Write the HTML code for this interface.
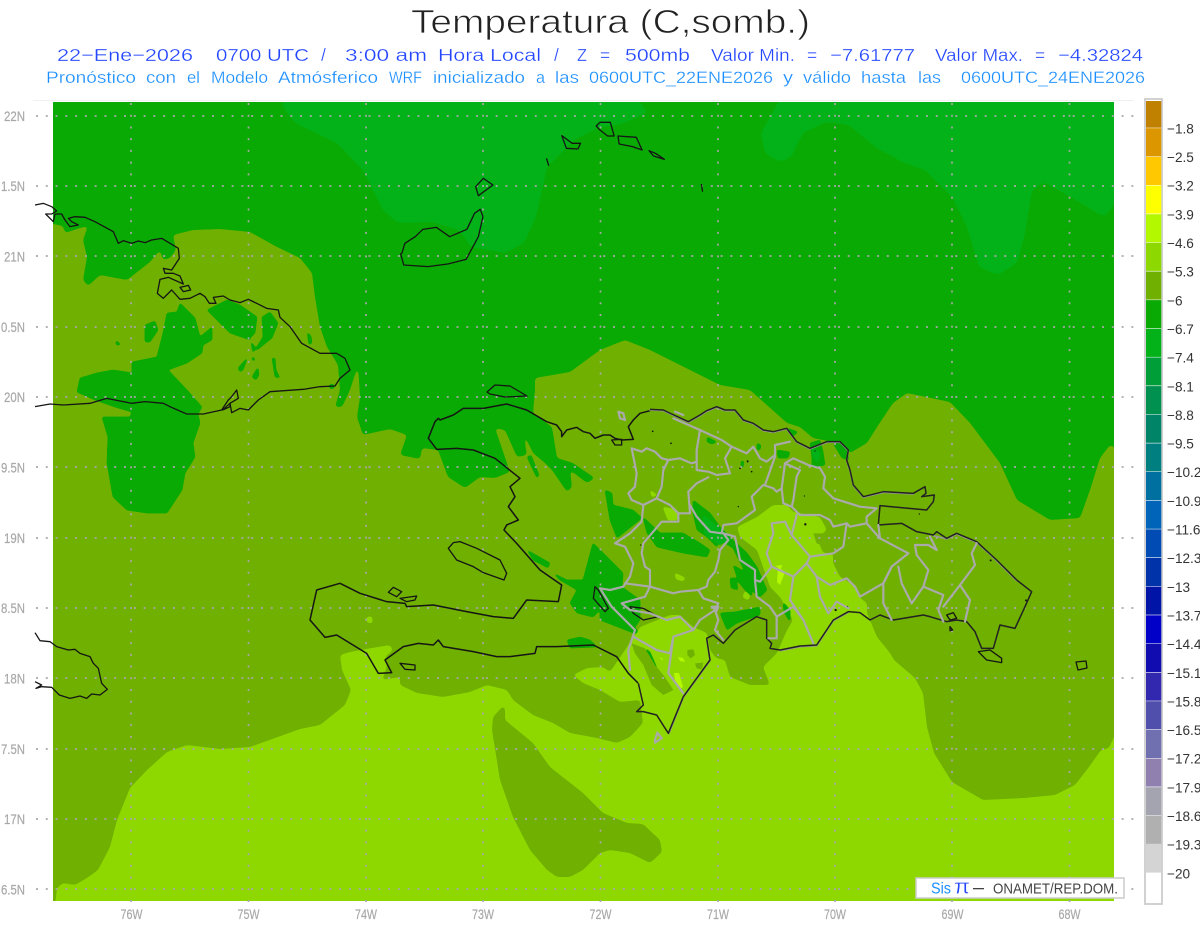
<!DOCTYPE html>
<html lang="es"><head><meta charset="utf-8"><title>Temperatura</title>
<style>
html,body{margin:0;padding:0;background:#fff;width:1200px;height:927px;overflow:hidden}
svg{display:block}
text{font-family:"Liberation Sans",sans-serif}
.c{fill:none;stroke:#151515;stroke-width:1.3;vector-effect:non-scaling-stroke;stroke-linejoin:round}
.p{fill:none;stroke:#aaa;stroke-width:2.2;vector-effect:non-scaling-stroke;stroke-linejoin:round;stroke-linecap:round}
.l2{fill:#2346ff;font-size:17.5px;stroke:#fff;stroke-width:.25}
.l3{fill:#1b8fff;font-size:17px;stroke:#fff;stroke-width:.25}
.ax{fill:#a8a8a8;font-size:14px;stroke:#a8a8a8;stroke-width:.2}
.cb{fill:#333;font-size:13.6px}
</style></head><body>
<svg width="1200" height="927" viewBox="0 0 1200 927" xmlns="http://www.w3.org/2000/svg">
<defs>
<clipPath id="mapclip"><rect x="53" y="102" width="1061" height="799"/></clipPath>
<filter id="sm3" filterUnits="userSpaceOnUse" x="0" y="60" width="1200" height="880" color-interpolation-filters="sRGB">
<feGaussianBlur stdDeviation="3"/><feComponentTransfer><feFuncA type="linear" slope="14" intercept="-6.5"/></feComponentTransfer>
</filter>
<filter id="sm2" filterUnits="userSpaceOnUse" x="0" y="60" width="1200" height="880" color-interpolation-filters="sRGB">
<feGaussianBlur stdDeviation="1.8"/><feComponentTransfer><feFuncA type="linear" slope="12" intercept="-5.5"/></feComponentTransfer>
</filter>
<filter id="sm1" filterUnits="userSpaceOnUse" x="0" y="60" width="1200" height="880" color-interpolation-filters="sRGB">
<feGaussianBlur stdDeviation="1.1"/><feComponentTransfer><feFuncA type="linear" slope="8" intercept="-2.4"/></feComponentTransfer>
</filter>
</defs>
<rect width="1200" height="927" fill="#fff"/>
<text x="411" y="33" font-size="33" textLength="399" lengthAdjust="spacingAndGlyphs" fill="#222" stroke="#fff" stroke-width=".75">Temperatura (C,somb.)</text>

<text class="l2" x="57" y="61" textLength="136" lengthAdjust="spacingAndGlyphs">22−Ene−2026</text>
<text class="l2" x="216" y="61" textLength="93" lengthAdjust="spacingAndGlyphs">0700 UTC</text>
<text class="l2" x="321" y="61">/</text>
<text class="l2" x="345" y="61" textLength="82" lengthAdjust="spacingAndGlyphs">3:00 am</text>
<text class="l2" x="438" y="61" textLength="103" lengthAdjust="spacingAndGlyphs">Hora Local</text>
<text class="l2" x="554" y="61">/</text>
<text class="l2" x="577" y="61" textLength="10" lengthAdjust="spacingAndGlyphs">Z</text>
<text class="l2" x="600" y="61">=</text>
<text class="l2" x="625" y="61" textLength="65" lengthAdjust="spacingAndGlyphs">500mb</text>
<text class="l2" x="711" y="61" textLength="84" lengthAdjust="spacingAndGlyphs">Valor Min.</text>
<text class="l2" x="807" y="61">=</text>
<text class="l2" x="830" y="61" textLength="85" lengthAdjust="spacingAndGlyphs">−7.61777</text>
<text class="l2" x="935" y="61" textLength="88" lengthAdjust="spacingAndGlyphs">Valor Max.</text>
<text class="l2" x="1035" y="61">=</text>
<text class="l2" x="1058" y="61" textLength="85" lengthAdjust="spacingAndGlyphs">−4.32824</text>

<text class="l3" x="46" y="83" textLength="90" lengthAdjust="spacingAndGlyphs">Pronóstico</text>
<text class="l3" x="146" y="83" textLength="30" lengthAdjust="spacingAndGlyphs">con</text>
<text class="l3" x="187" y="83" textLength="13" lengthAdjust="spacingAndGlyphs">el</text>
<text class="l3" x="211" y="83" textLength="57" lengthAdjust="spacingAndGlyphs">Modelo</text>
<text class="l3" x="278" y="83" textLength="100" lengthAdjust="spacingAndGlyphs">Atmósferico</text>
<text class="l3" x="389" y="83" textLength="33" lengthAdjust="spacingAndGlyphs">WRF</text>
<text class="l3" x="433" y="83" textLength="92" lengthAdjust="spacingAndGlyphs">inicializado</text>
<text class="l3" x="536" y="83" textLength="9" lengthAdjust="spacingAndGlyphs">a</text>
<text class="l3" x="555" y="83" textLength="24" lengthAdjust="spacingAndGlyphs">las</text>
<text class="l3" x="589" y="83" textLength="184" lengthAdjust="spacingAndGlyphs">0600UTC_22ENE2026</text>
<text class="l3" x="783" y="83" textLength="10" lengthAdjust="spacingAndGlyphs">y</text>
<text class="l3" x="803" y="83" textLength="48" lengthAdjust="spacingAndGlyphs">válido</text>
<text class="l3" x="861" y="83" textLength="45" lengthAdjust="spacingAndGlyphs">hasta</text>
<text class="l3" x="918" y="83" textLength="23" lengthAdjust="spacingAndGlyphs">las</text>
<text class="l3" x="961" y="83" textLength="184" lengthAdjust="spacingAndGlyphs">0600UTC_24ENE2026</text>

<line x1="33" y1="100.5" x2="1134" y2="100.5" stroke="#f0f0f0" stroke-width="1"/>

<g clip-path="url(#mapclip)">
<!-- base -->
<rect x="53" y="102" width="1061" height="799" fill="#0aaa04"/>
<!-- lighter green -->
<g filter="url(#sm3)" fill="#02b218">
<polygon points="283,92 283,107 295,123 337,143 363,170 383,210 398,223 432,222 459,230 471,247 505,253 524,243 536,217 547,167 574,140 600,127 619,125 648,113 632,92"/>
<polygon points="784,92 761,133 765,153 780,162 791,157 803,133 826,122 849,125 875,147 902,162 925,170 952,197 967,227 979,267 998,275 1017,263 1025,233 1032,190 1044,182 1071,197 1097,213 1105,217 1124,190 1124,92"/>
</g>
<!-- olive -->
<polygon filter="url(#sm2)" fill="#6fb000" points="43,222 63,226 65,233 80,228 88,226 83,240 87,257 83,280 88,286 100,275 127,280 150,262 160,250 163,260 170,258 176,250 173,235 193,230 220,229 250,232 277,247 300,258 312,273 315,297 320,327 327,347 338,365 340,390 335,407 342,407 350,390 358,365 360,397 357,417 363,435 390,429 407,435 400,455 420,459 422,448 438,450 448,477 465,488 480,477 495,478 510,472 495,428 505,430 517,457 527,455 523,432 533,453 545,463 552,470 567,492 572,487 570,470 587,483 595,478 583,470 573,463 557,458 552,427 533,413 535,390 535,378 570,372 600,350 625,340 650,350 690,370 720,385 750,390 787,423 800,427 813,438 833,442 847,450 850,453 867,443 877,427 893,403 907,393 950,402 970,423 1000,463 1017,500 1050,520 1080,518 1090,490 1100,458 1110,445 1124,452 1124,911 43,911"/>
<!-- lime -->
<polygon filter="url(#sm2)" fill="#8ed800" points="43,911 55,905 57,888 63,883 75,885 87,878 98,870 110,847 117,820 130,788 147,770 167,752 187,745 220,749 250,747 300,729 320,725 345,705 351,690 342,670 340,655 350,652 372,648 390,645 393,650 385,657 387,667 382,680 400,677 400,685 417,693 443,697 470,692 487,685 507,690 513,700 533,715 553,723 570,733 597,738 617,743 630,737 643,723 640,700 620,702 600,690 583,683 573,675 587,668 603,667 610,672 625,650 640,627 670,615 680,615 693,627 707,633 710,650 716,658 725,660 730,677 750,685 770,685 763,667 777,653 787,630 793,620 780,597 770,587 763,567 757,550 740,537 737,527 757,517 773,505 787,505 793,512 820,517 827,530 817,538 823,553 833,553 833,563 840,577 857,587 860,598 867,603 867,613 877,637 890,653 894,660 915,678 923,693 927,727 934,753 952,782 983,800 1024,798 1055,795 1075,785 1089,767 1101,750 1109,748 1124,715 1124,911"/>
<!-- olive blob south -->
<polygon filter="url(#sm2)" fill="#6fb000" points="503,706 493,717 492,730 500,780 513,817 530,850 547,870 557,877 570,877 583,870 600,853 610,850 630,853 650,863 662,852 660,840 643,824 627,823 603,813 583,793 550,767 533,743 505,720 505,708"/>

<!-- dark patches -->
<g fill="#0aaa04" filter="url(#sm1)">
<polygon points="145,325 155,321 158,330 150,342 145,342 145,335"/>
<polygon points="180,303 195,318 200,337 212,327 212,340 203,345 202,353 187,363 168,370 187,390 202,407 198,414 200,423 193,443 195,457 185,473 182,490 167,513 147,513 127,510 113,497 107,463 108,437 102,417 130,417 132,412 115,407 95,400 77,392 80,378 97,373 113,370 132,373 132,362 157,357 163,333 167,313 177,312"/>
<polygon points="207,310 227,300 240,305 257,317 255,333 250,338 253,353 263,337 262,317 270,312 278,323 272,338 257,350 250,340 230,333 217,320"/>
<polygon points="238,368 248,357 243,370 240,372"/><polygon points="251,357 255,358 254,362"/>
<polygon points="252,377 258,367 259,375 256,380"/>
<polygon points="272,358 275,377 280,378 276,370 275,358"/>
<polygon points="307,332 311,336 312,343 309,345"/>
<polygon points="116,340 121,345 116,345"/><polygon points="148,391 153,389 151,394"/>
<polygon points="330,384 335,385 333,389 329,388"/>
<polygon points="527,457 531,455 539,475 537,478"/>
<polygon points="567,640 580,637 590,640 597,647 570,648"/>
<polygon points="527,550 550,563 548,568 533,560"/>
<polygon points="553,573 567,580 583,580 593,543 610,560 623,573 622,587 640,600 640,620 633,630 600,610 593,617 577,613 570,603 577,590 560,580"/>
<polygon points="605,490 612,493 613,505 633,510 642,518 617,538 610,520"/>
<polygon points="600,550 617,567 623,578 600,577"/>
<polygon points="643,517 660,533 683,533 700,543 710,550 707,557 683,553 657,547 647,533"/>
<polygon points="693,500 710,513 720,527 733,540 747,553 757,567 767,590 760,597 747,587 737,577 733,565 745,572 733,548 720,540 717,547 707,537 697,530 693,513"/>
<polygon points="737,567 745,575 753,597 745,590 737,580"/>
<polygon points="730,578 736,578 738,590 731,588"/>
<polygon points="720,613 735,612 760,607 760,615 737,623 727,630"/>
<polygon points="783,602 790,610 790,622 784,612"/>
<polygon points="707,437 717,442 712,444 707,442"/>
<polygon points="757,443 761,445 760,450 757,450"/>
<polygon points="777,450 790,452 788,458 778,458"/>
<polygon points="787,428 798,432 792,437"/>
<polygon points="810,443 820,440 823,452 825,465 812,468 812,458"/>
<polygon points="833,443 845,445 849,460 842,458"/>
<polygon points="741,461 744,461 743,468 741,467"/>
<polygon points="645,648 650,652 657,668 654,668"/><polygon points="657,672 661,675 662,680 657,678"/>
<polygon points="600,610 638,630 636,634 600,620"/>
</g>
<g fill="#02b218" filter="url(#sm1)">
<polygon points="703,515 715,525 730,538 720,545 705,535"/>
<polygon points="812,448 820,452 818,462 813,458"/>
</g>
<!-- olive & lime details -->
<g fill="#6fb000" transform="translate(600,390) scale(.33333)">
<path d="M95,760L135,775L165,825L190,855L220,900L190,915L155,885L130,825L105,790Z"/>
<path d="M262,780L280,778L285,795L272,805L262,795Z"/><path d="M285,820L310,818L305,838L290,835Z"/>
<path d="M640,430L690,430L680,470L650,460Z"/>
</g>
<g fill="#8ed800" filter="url(#sm1)">
<polygon points="367,617 372,617 372,623 367,622"/>
<polygon points="675,573 685,578 683,581 676,579"/>
<polygon points="663,507 677,510 677,520 668,520"/>
<polygon points="650,490 657,495 652,497"/>
<polygon points="745,591 750,596 748,600 743,597"/>
<polygon points="458,617 462,617 460,620"/>
</g>
<g fill="#b4f800">
<polygon points="778,567 785,572 780,585 777,582"/>
<polygon points="775,566 782,565 781,569"/>
<polygon points="674,673 679,673 683,687 680,689 675,680"/>
<polygon points="678,657 683,658 685,662 680,661"/>
<polygon points="659,657 663,659 662,660"/>
</g>
</g>

<!-- grid -->
<g stroke="#aba6ab" stroke-width="1.7" fill="none">
<g stroke-dasharray="2 7.78">
<line x1="36" y1="116" x2="1135" y2="116"/><line x1="36" y1="186" x2="1135" y2="186"/>
<line x1="36" y1="256" x2="1135" y2="256"/><line x1="36" y1="327" x2="1135" y2="327"/>
<line x1="36" y1="397" x2="1135" y2="397"/><line x1="36" y1="467" x2="1135" y2="467"/>
<line x1="36" y1="538" x2="1135" y2="538"/><line x1="36" y1="608" x2="1135" y2="608"/>
<line x1="36" y1="678" x2="1135" y2="678"/><line x1="36" y1="749" x2="1135" y2="749"/>
<line x1="36" y1="819" x2="1135" y2="819"/><line x1="36" y1="889" x2="1135" y2="889"/>
</g>
<g stroke-dasharray="2 9.72">
<line x1="131" y1="103" x2="131" y2="906"/><line x1="248.5" y1="103" x2="248.5" y2="906"/>
<line x1="366" y1="103" x2="366" y2="906"/><line x1="483" y1="103" x2="483" y2="906"/>
<line x1="600.5" y1="103" x2="600.5" y2="906"/><line x1="718" y1="103" x2="718" y2="906"/>
<line x1="835" y1="103" x2="835" y2="906"/><line x1="952" y1="103" x2="952" y2="906"/>
<line x1="1069.5" y1="103" x2="1069.5" y2="906"/>
</g>
</g>

<!-- coasts -->
<g transform="translate(0,190) scale(.33333)">
<path class="c" d="M105,45L130,40L155,50L170,63L155,72L137,72L160,95L165,72L185,72L195,90L210,110L235,105L215,95L205,85L225,80L255,82L285,95L340,125L355,160L370,152L395,160L415,153L435,158L455,150L485,145L510,160L535,175L538,205L515,240L490,235L495,250L520,250L540,258L550,282L505,262L480,268L472,310L490,325L515,300L540,328L570,325L600,310L615,320L628,340L648,340L640,322L670,318L690,330L720,338L745,328L770,340L800,355L835,360L840,382L870,410L905,460L960,490L1010,490L1035,505L1050,540L1020,565L1005,588L960,590L910,598L810,605L775,630L745,660L720,655L695,668L690,640L715,625L710,600L695,620L685,630L665,660L610,672L560,672L510,650L490,640L435,635L395,640L320,625L270,640L190,645L150,642L105,650"/>
<path class="c" d="M540,292L565,286L572,300L550,305Z"/>
<path class="c" d="M690,640L668,660L690,650Z"/>
</g>
<g transform="translate(0,620) scale(.33333)">
<path class="c" d="M105,38L120,62L150,65L170,80L205,90L225,88L240,100L270,110L280,130L295,145L305,190L322,208L300,225L275,222L260,235L240,228L210,235L178,225L155,202L125,200L108,205L125,195L105,185"/>
</g>
<g transform="scale(.3827,.33333)">
<path class="c" d="M1050,760L1058,730L1085,710L1105,688L1140,682L1175,710L1220,688L1240,640L1255,628L1262,650L1250,710L1218,778L1170,792L1118,800L1055,795L1047,762Z"/>
<path class="c" d="M1263,535L1288,555L1250,587L1243,560Z"/>
<path class="c" d="M1428,475L1434,497"/>
<path class="c" d="M1468,407L1495,430L1517,430L1510,447L1480,445Z"/>
</g>
<g transform="translate(600,0) scale(.3827,.33333)">
<path class="c" d="M-10,378L0,367L27,367L37,408L20,408L0,390Z"/>
<path class="c" d="M47,408L95,412L110,450L85,440L50,432Z"/>
<path class="c" d="M128,452L145,460L168,478L140,468Z"/>
<path class="c" d="M265,552L268,575"/>
</g>
<path class="c" d="M487,392L495,385L510,386L527,396L505,397L490,394Z"/>
<path class="c" d="M1076,662L1086,661L1087,668L1078,670Z"/>
<g transform="translate(300,390) scale(.33333)">
<path class="c" style="stroke-width:1.5" d="M1014,879L985,850L950,800L880,765L770,770L710,770L705,790L630,800L590,800L520,785L430,770L415,750L400,765L355,760L310,770L255,810L275,848L235,850L200,790L110,735L75,742L30,690L50,600L120,580L180,610L260,635L315,640L320,650L400,645L500,665L580,680L640,685L680,630L775,635L785,585L720,540L650,460L612,420L620,405L655,390L625,350L645,320L630,290L660,265L635,245L585,205L520,180L470,175L410,178L385,145L405,95L415,85L420,90L460,75L490,55L550,55L620,42L680,60L740,95L770,105L785,125L785,140L800,120L830,112L850,125L870,130L885,145L910,135L930,135L945,145L965,150L1000,148L985,110L1000,90L1020,70L1050,62"/>
<path class="c" d="M445,475L460,458L480,455L530,475L600,510L620,550L612,570L550,548L520,530L470,510Z"/>
<path class="c" d="M265,607L280,592L305,605L290,620Z"/>
<path class="c" d="M300,625L350,618L345,630L320,635Z"/>
<path class="c" d="M300,820L345,825L345,840L315,838Z"/>
<path class="c" d="M885,590L895,600L925,655L915,665L880,625Z"/>
<path class="c" d="M935,150L965,148L965,165L945,165Z"/>
</g>
<g transform="translate(600,390) scale(.33333)">
<path class="p" style="stroke:#999;stroke-width:1.6" d="M150,60L190,62L215,74L265,97L300,77L320,64L350,52L375,62L405,62L430,92L460,102L490,122L520,127L560,117L590,157L630,177L680,157L720,157L745,182L740,212L750,242L760,287L790,322L850,307L940,312M1000,437L1040,447L1070,432L1130,457L1190,512L1250,572M745,667L700,692L650,767L600,770L540,782M320,747L330,812L250,922L207,1030"/>
<path class="c" style="stroke-width:1.5;stroke:#222" d="M150,58L190,60L215,72L265,95L300,75L320,62L350,50L375,60L405,60L430,90L460,100L490,120L520,125L560,115L590,155L630,175L680,155L720,155L745,180L740,210L750,240L760,285L790,320L850,305L940,310L975,290L978,310L965,320L1003,315L1000,335L980,360L840,347L835,405L905,400L950,425L1000,435L1010,425L1040,445L1070,430L1130,455L1190,510L1250,570L1295,605L1275,650L1245,715L1200,705L1180,775L1145,775L1125,725L1100,695L1070,690L1040,695L990,680L970,675L880,690L840,675L810,690L780,668L745,665L700,690L650,765L600,768L540,780L510,775L515,760L500,745L500,690L470,680L405,720L370,760L340,735L320,745L330,810L250,920L205,1030L170,975L130,965L110,965L130,945L115,880"/>
<path class="c" d="M1135,785L1170,780L1205,805L1205,818L1160,810Z"/>
<path class="c" d="M1040,675L1060,668L1070,685L1050,690Z"/>
<path class="c" d="M1050,710L1058,720L1050,722Z"/>
<path class="c" d="M90,650L130,655L175,680L130,690L100,670Z"/>
<g fill="#111">
<circle cx="158" cy="124" r="2.5"/><circle cx="213" cy="160" r="2.5"/><circle cx="443" cy="214" r="3"/><circle cx="420" cy="235" r="2.5"/><circle cx="455" cy="245" r="2.5"/><circle cx="616" cy="403" r="3.5"/><circle cx="707" cy="660" r="3.5"/><circle cx="742" cy="650" r="2.5"/><circle cx="1172" cy="511" r="3"/><circle cx="1278" cy="631" r="3"/><circle cx="958" cy="372" r="2"/><circle cx="613" cy="318" r="2"/><circle cx="415" cy="350" r="2"/><circle cx="122" cy="465" r="2"/><circle cx="645" cy="183" r="2"/>
</g>
<!-- provinces -->
<path class="p" d="M95,175L110,250L105,290L85,310L95,330L130,345L125,395L90,430L45,460L75,470L100,520L90,560L70,590L30,600L0,595L35,650L105,720L85,780L90,840"/>
<path class="p" d="M95,175L125,185L140,175L165,185L185,205L205,210L240,205L275,220L290,215"/>
<path class="p" d="M220,85L300,120L365,150L395,170L440,190L460,170L480,205L500,215L525,195L525,165L570,155"/>
<path class="p" d="M300,120L290,180L290,240L325,245L350,255L390,250L375,205L395,170"/>
<path class="p" d="M205,210L190,240L185,290L170,325L130,345M170,325L210,345L235,370L270,370L265,305L290,280L325,262"/>
<path class="p" d="M270,345L290,380L330,425L365,430L370,405L410,400L465,360L455,320L490,285L520,295L530,305L545,295L555,220L600,240L590,260L580,330L575,350L600,375L660,375L690,390L700,410L740,400L730,470L700,490L630,500L575,435L590,375"/>
<path class="p" d="M525,200L495,285M545,295L550,340L575,350M555,220L580,205L625,225L660,235L675,260L670,295L700,325L780,350L830,355L800,380L800,400L840,445L925,490"/>
<path class="p" d="M515,400L555,395L575,435M515,400L520,430L500,490L515,530L570,555L580,560L570,630L610,690L640,760"/>
<path class="p" d="M630,500L620,520L650,560L690,585L740,565L765,590L780,620L850,580L875,530L925,490M800,400L750,410L740,400M620,520L580,560M650,560L660,620L685,670L710,635L745,655"/>
<path class="p" d="M515,530L480,575L465,570L465,540L420,510L405,440L370,430L385,450L360,480L355,510L345,545L325,570L320,590L295,600L240,605L220,610L150,590L75,580"/>
<path class="p" d="M125,490L135,530L150,540L150,590L135,620M125,490L130,460L185,395L235,395L235,370"/>
<path class="p" d="M295,600L310,625L355,640L345,660L300,690L280,720M345,660L355,690L345,720L370,750"/>
<path class="p" d="M465,570L470,620L510,650L530,680L530,745L505,745M530,680L580,650L610,690"/>
<path class="p" d="M135,620L65,640L90,660L150,670L200,690L240,680L280,720L220,740L210,790L170,780L100,740M220,740L205,850L250,910"/>
<path class="p" d="M875,530L850,580L850,640L875,690M895,530L905,580L935,640L970,590L985,540L950,495L945,465L985,465L1010,480L990,440M970,590L1030,615L1015,660L1030,695M1130,460L1115,490L1125,525L1080,585L1030,650M1080,585L1110,630L1095,695M840,445L835,405"/>
<path class="p" d="M55,65L70,70L75,90L60,85ZM225,65L250,75M335,650L355,650L350,662ZM165,1050L172,1028L185,1045L165,1058Z"/>
</g>

<!-- axes -->
<g class="ax">
<text x="4" y="121" textLength="21" lengthAdjust="spacingAndGlyphs">22N</text>
<text x="1" y="191" textLength="24" lengthAdjust="spacingAndGlyphs">1.5N</text>
<text x="4" y="261.5" textLength="21" lengthAdjust="spacingAndGlyphs">21N</text>
<text x="1" y="332" textLength="24" lengthAdjust="spacingAndGlyphs">0.5N</text>
<text x="4" y="402" textLength="21" lengthAdjust="spacingAndGlyphs">20N</text>
<text x="1" y="472.5" textLength="24" lengthAdjust="spacingAndGlyphs">9.5N</text>
<text x="4" y="543" textLength="21" lengthAdjust="spacingAndGlyphs">19N</text>
<text x="1" y="613" textLength="24" lengthAdjust="spacingAndGlyphs">8.5N</text>
<text x="4" y="683.5" textLength="21" lengthAdjust="spacingAndGlyphs">18N</text>
<text x="1" y="754" textLength="24" lengthAdjust="spacingAndGlyphs">7.5N</text>
<text x="4" y="824" textLength="21" lengthAdjust="spacingAndGlyphs">17N</text>
<text x="1" y="894.5" textLength="24" lengthAdjust="spacingAndGlyphs">6.5N</text>
<text x="120.5" y="919" textLength="22" lengthAdjust="spacingAndGlyphs">76W</text>
<text x="237.5" y="919" textLength="22" lengthAdjust="spacingAndGlyphs">75W</text>
<text x="355" y="919" textLength="22" lengthAdjust="spacingAndGlyphs">74W</text>
<text x="472" y="919" textLength="22" lengthAdjust="spacingAndGlyphs">73W</text>
<text x="589.5" y="919" textLength="22" lengthAdjust="spacingAndGlyphs">72W</text>
<text x="707" y="919" textLength="22" lengthAdjust="spacingAndGlyphs">71W</text>
<text x="824" y="919" textLength="22" lengthAdjust="spacingAndGlyphs">70W</text>
<text x="941.5" y="919" textLength="22" lengthAdjust="spacingAndGlyphs">69W</text>
<text x="1058.5" y="919" textLength="22" lengthAdjust="spacingAndGlyphs">68W</text>
</g>

<!-- legend box -->
<rect x="916" y="878" width="208" height="20" fill="#fff" stroke="#ccc" stroke-width="1.5"/>
<text x="931" y="893.5" font-size="16" fill="#1b8fff" textLength="20" lengthAdjust="spacingAndGlyphs">Sis</text>
<text x="954" y="893.5" font-size="20" fill="#2346ff" textLength="16" lengthAdjust="spacingAndGlyphs" stroke="#fff" stroke-width=".3">π</text>
<rect x="973" y="888" width="11" height="1.3" fill="#444"/>
<text x="993" y="893.5" font-size="14.5" fill="#444" textLength="125" lengthAdjust="spacingAndGlyphs">ONAMET/REP.DOM.</text>

<!-- colourbar -->
<rect x="1145" y="99" width="17" height="805" fill="#fff" stroke="#ccc" stroke-width="1.8"/>
<g>
<rect x="1146" y="101" width="15.3" height="26.7" fill="#c08000"/>
<rect x="1146" y="128.2" width="15.3" height="28.2" fill="#dc9600"/>
<rect x="1146" y="156.9" width="15.3" height="28.1" fill="#ffc800"/>
<rect x="1146" y="185.5" width="15.3" height="28.1" fill="#ffff00"/>
<rect x="1146" y="214.2" width="15.3" height="28.1" fill="#b4f800"/>
<rect x="1146" y="242.8" width="15.3" height="28.1" fill="#8cd800"/>
<rect x="1146" y="271.5" width="15.3" height="28.1" fill="#6fb000"/>
<rect x="1146" y="300.1" width="15.3" height="28.1" fill="#0aaa04"/>
<rect x="1146" y="328.8" width="15.3" height="28.1" fill="#02b218"/>
<rect x="1146" y="357.4" width="15.3" height="28.1" fill="#009e38"/>
<rect x="1146" y="386.1" width="15.3" height="28.1" fill="#009050"/>
<rect x="1146" y="414.7" width="15.3" height="28.1" fill="#008468"/>
<rect x="1146" y="443.4" width="15.3" height="28.1" fill="#007f80"/>
<rect x="1146" y="472" width="15.3" height="28.1" fill="#0070a0"/>
<rect x="1146" y="500.7" width="15.3" height="28.1" fill="#0064b8"/>
<rect x="1146" y="529.3" width="15.3" height="28.1" fill="#004cb4"/>
<rect x="1146" y="558" width="15.3" height="28.1" fill="#0032aa"/>
<rect x="1146" y="586.6" width="15.3" height="28.1" fill="#0014a8"/>
<rect x="1146" y="615.3" width="15.3" height="28.1" fill="#0000c8"/>
<rect x="1146" y="643.9" width="15.3" height="28.1" fill="#100cb0"/>
<rect x="1146" y="672.6" width="15.3" height="28.1" fill="#3228b0"/>
<rect x="1146" y="701.2" width="15.3" height="28.1" fill="#5050ac"/>
<rect x="1146" y="729.9" width="15.3" height="28.1" fill="#7070b0"/>
<rect x="1146" y="758.5" width="15.3" height="28.1" fill="#9080b0"/>
<rect x="1146" y="787.2" width="15.3" height="28.1" fill="#a4a4b0"/>
<rect x="1146" y="815.8" width="15.3" height="28.1" fill="#b0b0b0"/>
<rect x="1146" y="844" width="15.3" height="28.6" fill="#d4d4d4"/>
</g>
<g class="cb">
<text x="1167" y="133.5">−1.8</text><text x="1167" y="162">−2.5</text><text x="1167" y="190.7">−3.2</text><text x="1167" y="219.4">−3.9</text><text x="1167" y="248">−4.6</text><text x="1167" y="276.7">−5.3</text><text x="1167" y="305.3">−6</text><text x="1167" y="334">−6.7</text><text x="1167" y="362.6">−7.4</text><text x="1167" y="391.3">−8.1</text><text x="1167" y="420">−8.8</text><text x="1167" y="448.6">−9.5</text><text x="1167" y="477.2">−10.2</text><text x="1167" y="505.9">−10.9</text><text x="1167" y="534.5">−11.6</text><text x="1167" y="563.2">−12.3</text><text x="1167" y="591.8">−13</text><text x="1167" y="620.5">−13.7</text><text x="1167" y="649.1">−14.4</text><text x="1167" y="677.8">−15.1</text><text x="1167" y="706.4">−15.8</text><text x="1167" y="735.1">−16.5</text><text x="1167" y="763.7">−17.2</text><text x="1167" y="792.4">−17.9</text><text x="1167" y="821">−18.6</text><text x="1167" y="849.7">−19.3</text><text x="1167" y="878.3">−20</text>
</g>
</svg>
</body></html>
